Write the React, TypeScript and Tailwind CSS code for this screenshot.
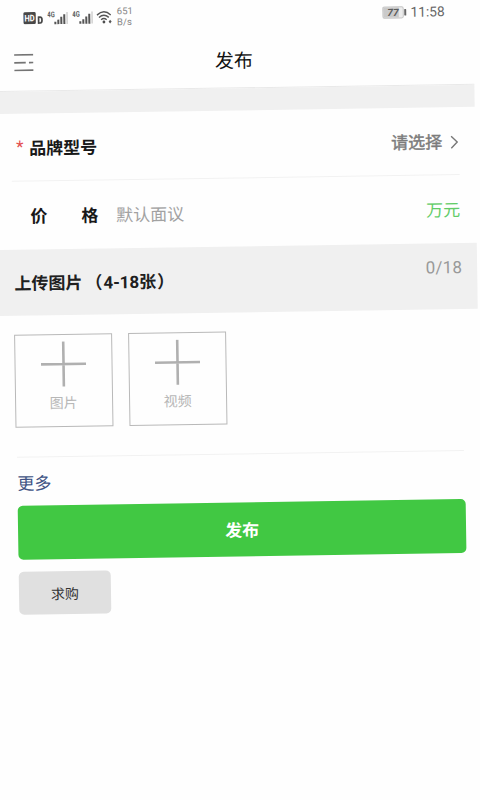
import React from "react";

function Signal() {
  return (
    <svg width="21" height="14" viewBox="0 0 21 14" className="shrink-0">
      <text x="0" y="6" fontSize="8" fontWeight="700" fill="#5c5c5c" textLength="7.5" lengthAdjust="spacingAndGlyphs">4G</text>
      <g fill="#555">
        <rect x="7" y="10.5" width="2" height="2.5" />
        <rect x="10" y="8.5" width="2" height="4.5" />
        <rect x="13" y="5.7" width="2" height="7.3" />
        <rect x="16" y="3.2" width="2" height="9.8" />
      </g>
      <rect x="19" y="1" width="1.6" height="12" fill="#d4d4d4" />
    </svg>
  );
}

function StatusBar() {
  return (
    <div className="flex h-[37px] items-center pl-[22.5px] pr-[28.5px]">
      <svg width="21" height="13" viewBox="0 0 21 13" className="shrink-0">
        <rect x="0" y="0.5" width="12.5" height="12" rx="1.5" fill="#484848" />
        <text x="1.2" y="9.8" fontSize="9" fontWeight="700" fill="#fff" textLength="10.2" lengthAdjust="spacingAndGlyphs">HD</text>
        <path d="M15.3 5.8h1.6q1.8 0 1.8 2.9t-1.8 2.9h-1.6z" fill="none" stroke="#484848" strokeWidth="1.7" />
      </svg>
      <div className="ml-[3px] flex gap-[4px]">
        <Signal />
        <Signal />
      </div>
      <svg width="16" height="14" viewBox="0 0 16 14" className="ml-[3px] shrink-0" fill="none" stroke="#555" strokeWidth="1.4">
        <path d="M.7 4.6Q7.6-1.8 14.5 4.6M2.7 7Q7.6 2.6 12.5 7M4.8 9.3Q7.6 6.9 10.4 9.3" />
        <circle cx="7.6" cy="11.6" r="1.4" fill="#4d4d4d" stroke="none" />
        <path d="M12.3 11.3l1.5-1.8 1.5 1.8-1.5 1.8z" fill="#555" stroke="none" />
      </svg>
      <div className="ml-[5px] mt-[-2px] text-[9.5px] leading-[11px] tracking-[0.1px] text-[#858585]">
        <div>651</div>
        <div>B/s</div>
      </div>
      <div className="ml-auto flex items-center">
        <svg width="25" height="13" viewBox="0 0 25 13">
          <rect x="0.5" y="0.8" width="20.5" height="11.2" rx="1.5" fill="#ececec" stroke="#c4c4c4" />
          <rect x="1" y="1.2" width="15.5" height="10.4" fill="#cacaca" />
          <rect x="22" y="3.2" width="2" height="6.4" rx="0.5" fill="#666" />
          <text x="5" y="10" fontSize="10" fontWeight="700" fontStyle="italic" fill="#5c5c5c" textLength="11.5" lengthAdjust="spacingAndGlyphs">77</text>
        </svg>
        <span className="ml-[3px] text-[13.8px] leading-none text-[#666]">11:58</span>
      </div>
    </div>
  );
}

function UploadBox({ label }: { label: string }) {
  return (
    <button className="flex h-[93px] w-[98px] flex-col items-center border border-[#b9b9b9] pt-[6px] text-[#b7b7b7]">
      <svg width="46" height="46" viewBox="0 0 46 46" stroke="#b0b0b0" strokeWidth="2.6">
        <path d="M23 .5v45M.5 23h45" />
      </svg>
      <span className="mt-[6px] text-[14px] leading-[20px]">{label}</span>
    </button>
  );
}

export default function App() {
  return (
    <div className="h-[800px] w-[480px] overflow-hidden bg-[#fefefe] font-['Roboto','Noto_Sans_CJK_SC',sans-serif]">
      <main className="ml-[-16px] w-[489px] origin-[16px_0] rotate-[-0.87deg]">
        <div className="pl-[16px]">
          <StatusBar />
        </div>
        <header className="grid h-[55px] grid-cols-[1fr_auto_1fr] items-center border-b border-[#e9e9e9] pl-[29px] pr-[20px]">
          <svg width="20" height="18" viewBox="0 0 20 18" stroke="#747474" strokeWidth="1.7" className="mt-[-2px]">
            <path d="M.3 1.2h19M.3 9h11.5M15 9h4.3M.3 16.7h19" />
          </svg>
          <h1 className="mt-px text-[19px] leading-none text-[#111]">发布</h1>
        </header>
        <div className="h-[22px] bg-[#f0f0f0]" />
        <section className="pl-[25px] pr-[16px]">
          <div className="flex h-[68px] items-center border-b border-[#f2f2f2] pl-[2px] pt-[5px]">
            <span className="mt-[-5px] w-[16px] pl-[3px] text-[17px] leading-none text-[#e34d4d]">*</span>
            <span className="text-[17px] font-bold text-[#181818]">品牌型号</span>
            <span className="ml-auto text-[17px] text-[#7c7c7c] [-webkit-text-stroke:0.45px_#7c7c7c]">请选择</span>
            <svg width="9" height="14" viewBox="0 0 9 14" fill="none" stroke="#777" strokeWidth="1.4" className="ml-[8px] mt-[-3px]">
              <path d="M1 1l6 6-6 6" />
            </svg>
          </div>
          <div className="flex h-[68px] items-center pl-[2px] pt-[4px] text-[17px]">
            <span className="ml-[16px] flex w-[68px] justify-between font-bold text-[#181818]">
              <span>价</span>
              <span>格</span>
            </span>
            <span className="ml-[18px] text-[#a2a2a2]">默认面议</span>
            <span className="ml-auto text-[#62cc68]">万元</span>
          </div>
        </section>
        <section className="flex h-[66px] items-start justify-between bg-[#f0f0f0] pl-[26px] pr-[15px]">
          <h2 className="mt-[22px] flex text-[17px] font-bold leading-[25px] text-[#202020]">
            <span>上传图片</span>
            <span className="ml-[3px]">（</span>
            <span className="ml-px">4-18张</span>
            <span className="ml-px">）</span>
          </h2>
          <span className="mt-[12px] text-[17px] leading-[25px] tracking-[0.2px] text-[#999]">0/18</span>
        </section>
        <section className="ml-[24.5px] mr-[16px] pt-[19px]">
          <div className="flex gap-[16px]">
            <UploadBox label="图片" />
            <UploadBox label="视频" />
          </div>
        </section>
        <section className="pl-[26px] pr-[16px]">
          <div className="mt-[29px] h-px bg-[#f2f2f2]" />
          <a className="mt-[14px] block text-[17px] leading-[25px] text-[#405384]">更多</a>
          <button className="mt-[9px] block h-[54px] w-[448px] rounded-[5px] bg-[#41c843] pt-[3px] text-[17px] font-bold text-white">发布</button>
          <button className="mt-[12px] block h-[43px] w-[92px] rounded-[5px] bg-[#e0e0e0] pt-[3px] text-[14px] text-[#333]">求购</button>
        </section>
      </main>
    </div>
  );
}
